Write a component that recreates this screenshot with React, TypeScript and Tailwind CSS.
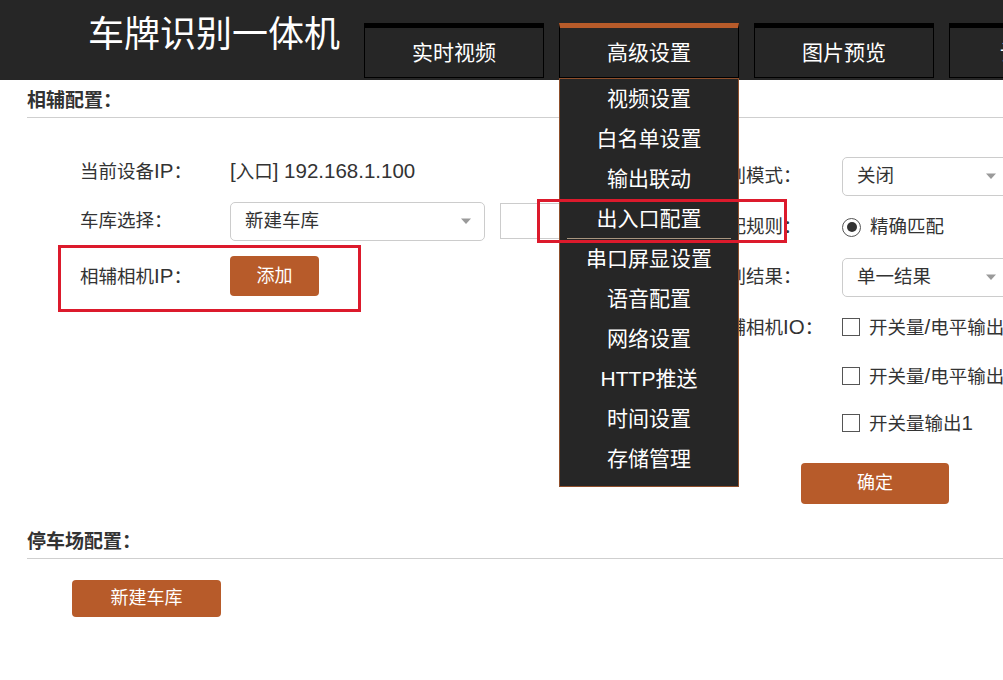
import React from 'react'

const font = "font-['Liberation_Sans','Noto_Sans_CJK_SC',sans-serif]"

const tabs = ['实时视频', '高级设置', '图片预览', '设备管理']

const menu = [
  '视频设置',
  '白名单设置',
  '输出联动',
  '出入口配置',
  '串口屏显设置',
  '语音配置',
  '网络设置',
  'HTTP推送',
  '时间设置',
  '存储管理',
]

// latin runs render a bit larger than the CJK ones in the original UI font
function L({ children }: { children: React.ReactNode }) {
  return <span className="text-[20.5px]">{children}</span>
}

function Caret() {
  return (
    <svg width="12" height="8" viewBox="0 0 12 8" className="shrink-0">
      <path d="M1 1.5 L11 1.5 L6 7 Z" fill="#9a9a9a" />
    </svg>
  )
}

function Select({ value, width }: { value: string; width: string }) {
  return (
    <div
      className={`${width} h-[39px] shrink-0 border border-[#cccccc] rounded-[5px] bg-white flex items-center justify-between pl-[14px] pr-[12px] text-[18.5px] text-[#333]`}
    >
      <span>{value}</span>
      <Caret />
    </div>
  )
}

function Check({ children }: { children: React.ReactNode }) {
  return (
    <div className="flex items-center gap-[9px] text-[18.5px] text-[#333] whitespace-nowrap">
      <span className="w-[18px] h-[18px] border border-[#555] bg-white shrink-0" />
      <span>{children}</span>
    </div>
  )
}

function Heading({ text }: { text: string }) {
  return (
    <div className="ml-[27px] border-b border-[#cfcfcf] pb-[4px] leading-[24px] text-[19px] font-bold text-[#333]">
      {text}
    </div>
  )
}

export default function App() {
  return (
    <div className={`relative w-[1003px] h-[680px] overflow-hidden bg-white ${font}`}>
      {/* header */}
      <header className="h-[80px] bg-[#262626] flex">
        <div className="w-[364px] shrink-0 pl-[88px] pt-[12px] text-[36px] leading-[46px] text-white whitespace-nowrap">
          车牌识别一体机
        </div>
        <nav className="flex gap-[15px] self-end mb-[2px]">
          {tabs.map((t, i) => (
            <div key={t} className="relative w-[180px] shrink-0">
              <div
                className={`h-[55px] border border-black border-t-[5px] ${
                  i === 1 ? 'border-t-[#b75b2a]' : ''
                } flex items-center justify-center text-[21px] text-white ${
                  i === 3 ? 'pl-[6px]' : ''
                }`}
              >
                {t}
              </div>
              {i === 1 && (
                <div className="absolute left-0 top-full z-10 w-[180px] bg-[#262626] border border-[#8e4f2c] pb-[7px]">
                  {menu.map((m) => (
                    <div key={m} className="h-[40px] px-[7px]">
                      <div
                        className={`h-full flex items-center justify-center text-[21px] text-white ${
                          m === '出入口配置' ? 'border-b border-[#a8957f]' : ''
                        }`}
                      >
                        {m}
                      </div>
                    </div>
                  ))}
                </div>
              )}
            </div>
          ))}
        </nav>
      </header>

      {/* 相辅配置 */}
      <div className="pt-[9px]">
        <Heading text="相辅配置：" />
      </div>

      <div className="flex items-start text-[18.5px] text-[#333]">
        {/* left column */}
        <div className="w-[709px] shrink-0 pl-[80px] pt-[33px]">
          <div className="h-[40px] flex items-center">
            <span className="w-[150px] shrink-0">
              当前设备<L>IP</L>：
            </span>
            <span>
              <L>[</L>入口<L>] 192.168.1.100</L>
            </span>
          </div>
          <div className="h-[40px] mt-[10px] flex items-center">
            <span className="w-[150px] shrink-0">车库选择：</span>
            <Select value="新建车库" width="w-[255px]" />
            <div className="ml-[15px] w-[120px] h-[36px] border border-[#cccccc]" />
          </div>
          <div className="h-[40px] mt-[15px] flex items-center">
            <span className="w-[150px] shrink-0">
              相辅相机<L>IP</L>：
            </span>
            <button className="w-[89px] h-[40px] rounded-[4px] bg-[#b75b2a] text-white text-[18px]">
              添加
            </button>
          </div>
        </div>

        {/* right column */}
        <div className="pt-[38px]">
          <div className="h-[40px] flex items-center">
            <span className="w-[133px] shrink-0">识别模式：</span>
            <Select value="关闭" width="w-[168px]" />
          </div>
          <div className="h-[40px] mt-[11px] flex items-center">
            <span className="w-[133px] shrink-0">匹配规则：</span>
            <div className="flex items-center gap-[9px]">
              <span className="w-[19px] h-[19px] rounded-full border border-[#555] flex items-center justify-center">
                <span className="w-[10px] h-[10px] rounded-full bg-[#333]" />
              </span>
              <span>精确匹配</span>
            </div>
          </div>
          <div className="h-[40px] mt-[10px] flex items-center">
            <span className="w-[133px] shrink-0">识别结果：</span>
            <Select value="单一结果" width="w-[168px]" />
          </div>
          <div className="h-[40px] mt-[10px] flex items-center">
            <span className="w-[133px] shrink-0">
              相辅相机<L>IO</L>：
            </span>
            <Check>
              开关量<L>/</L>电平输出<L>1</L>
            </Check>
          </div>
          <div className="h-[40px] mt-[9px] flex items-center pl-[133px]">
            <Check>
              开关量<L>/</L>电平输出<L>2</L>
            </Check>
          </div>
          <div className="h-[40px] mt-[7px] flex items-center pl-[133px]">
            <Check>
              开关量输出<L>1</L>
            </Check>
          </div>
          <button className="ml-[92px] mt-[20px] w-[148px] h-[41px] rounded-[4px] bg-[#b75b2a] text-white text-[18px]">
            确定
          </button>
        </div>
      </div>

      {/* 停车场配置 */}
      <div className="mt-[26px]">
        <Heading text="停车场配置：" />
      </div>
      <button className="ml-[72px] mt-[21px] w-[149px] h-[37px] rounded-[4px] bg-[#b75b2a] text-white text-[18px]">
        新建车库
      </button>

      {/* red annotation boxes */}
      <div className="absolute left-[58px] top-[245px] w-[303px] h-[67px] border-[3px] border-[#dc1a2c] pointer-events-none" />
      <div className="absolute left-[537px] top-[199px] w-[250px] h-[44px] border-[3px] border-[#dc1a2c] z-20 pointer-events-none" />
    </div>
  )
}
